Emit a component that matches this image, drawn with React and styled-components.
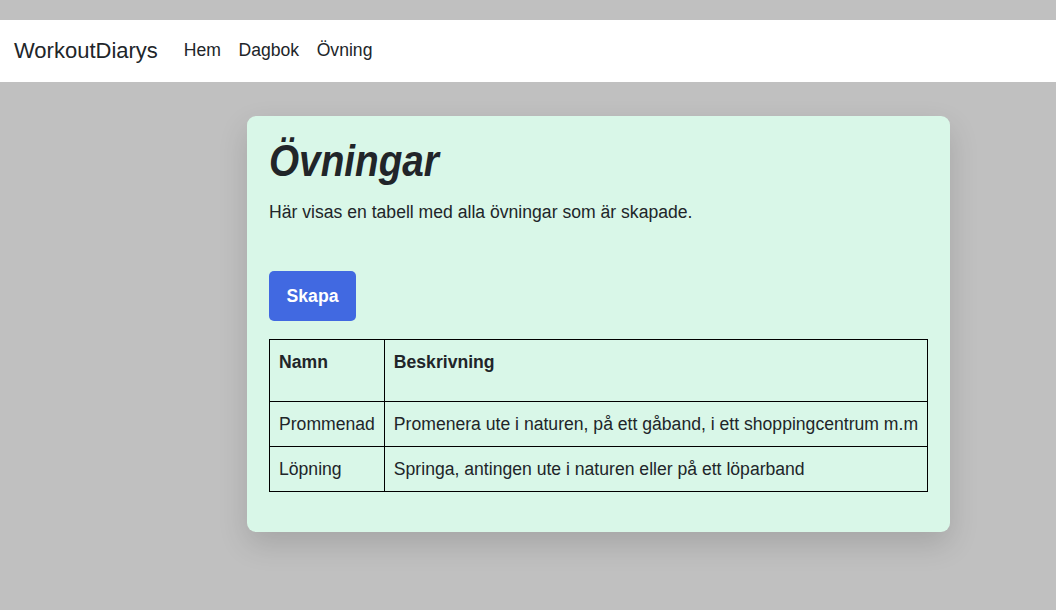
import React from "react";
import styled, { createGlobalStyle } from "styled-components";

const Global = createGlobalStyle`
  html, body { margin: 0; padding: 0; }
  body {
    background: #c0c0c0;
    font-family: "Liberation Sans", Arial, sans-serif;
    color: #212529;
    font-size: 17.6px;
    line-height: 1.5;
  }
  * { box-sizing: border-box; }
`;

const Page = styled.div`
  min-height: 610px;
  padding-top: 20px;
`;

const Navbar = styled.nav`
  background: #ffffff;
  height: 62px;
  display: flex;
  align-items: center;
  padding: 0 14px;
`;

const Brand = styled.a`
  font-size: 22px;
  color: #212529;
  text-decoration: none;
  margin-right: 26px;
  line-height: 1;
`;

const NavList = styled.div`
  display: flex;
  gap: 17.5px;
`;

const NavLink = styled.a`
  font-size: 17.6px;
  color: #212529;
  text-decoration: none;
  line-height: 1;
`;

const Main = styled.main`
  padding: 34px 0 0 247px;
`;

const Card = styled.section`
  width: 703px;
  background: #d9f7e8;
  border-radius: 9px;
  padding: 18px 22px 40px 22px;
  box-shadow: 0 12px 30px rgba(0, 0, 0, 0.14);
`;

const Title = styled.h1`
  margin: 0 0 11px 0;
  font-family: "Liberation Sans", Arial, sans-serif;
  font-style: italic;
  font-weight: 700;
  font-size: 45px;
  line-height: 1.2;
  color: #212529;
  transform: scaleX(0.86);
  transform-origin: left center;
`;

const Lead = styled.p`
  margin: 0 0 46px 0;
  font-size: 17.6px;
`;

const Button = styled.button`
  display: block;
  background: #4169e1;
  color: #ffffff;
  border: none;
  border-radius: 5px;
  width: 87px;
  height: 50px;
  font-family: "Liberation Sans", Arial, sans-serif;
  font-weight: 700;
  font-size: 17.6px;
  padding: 0;
  margin: 0 0 18px 0;
  cursor: pointer;
`;

const Table = styled.table`
  border-collapse: collapse;
  white-space: nowrap;
`;

const Th = styled.th`
  border: 1px solid #000;
  text-align: left;
  vertical-align: top;
  font-weight: 700;
  padding: 9px 9px 26px 9px;
  line-height: 26px;
`;

const Td = styled.td`
  border: 1px solid #000;
  padding: 9px 9px 9px 9px;
  line-height: 26px;
`;

const rows = [
  ["Prommenad", "Promenera ute i naturen, på ett gåband, i ett shoppingcentrum m.m"],
  ["Löpning", "Springa, antingen ute i naturen eller på ett löparband"],
];

export default function App() {
  return (
    <Page>
      <Global />
      <Navbar>
        <Brand href="#">WorkoutDiarys</Brand>
        <NavList>
          <NavLink href="#">Hem</NavLink>
          <NavLink href="#">Dagbok</NavLink>
          <NavLink href="#">Övning</NavLink>
        </NavList>
      </Navbar>
      <Main>
        <Card>
          <Title>Övningar</Title>
          <Lead>Här visas en tabell med alla övningar som är skapade.</Lead>
          <Button>Skapa</Button>
          <Table>
            <thead>
              <tr>
                <Th>Namn</Th>
                <Th>Beskrivning</Th>
              </tr>
            </thead>
            <tbody>
              {rows.map(([n, d]) => (
                <tr key={n}>
                  <Td>{n}</Td>
                  <Td>{d}</Td>
                </tr>
              ))}
            </tbody>
          </Table>
        </Card>
      </Main>
    </Page>
  );
}
